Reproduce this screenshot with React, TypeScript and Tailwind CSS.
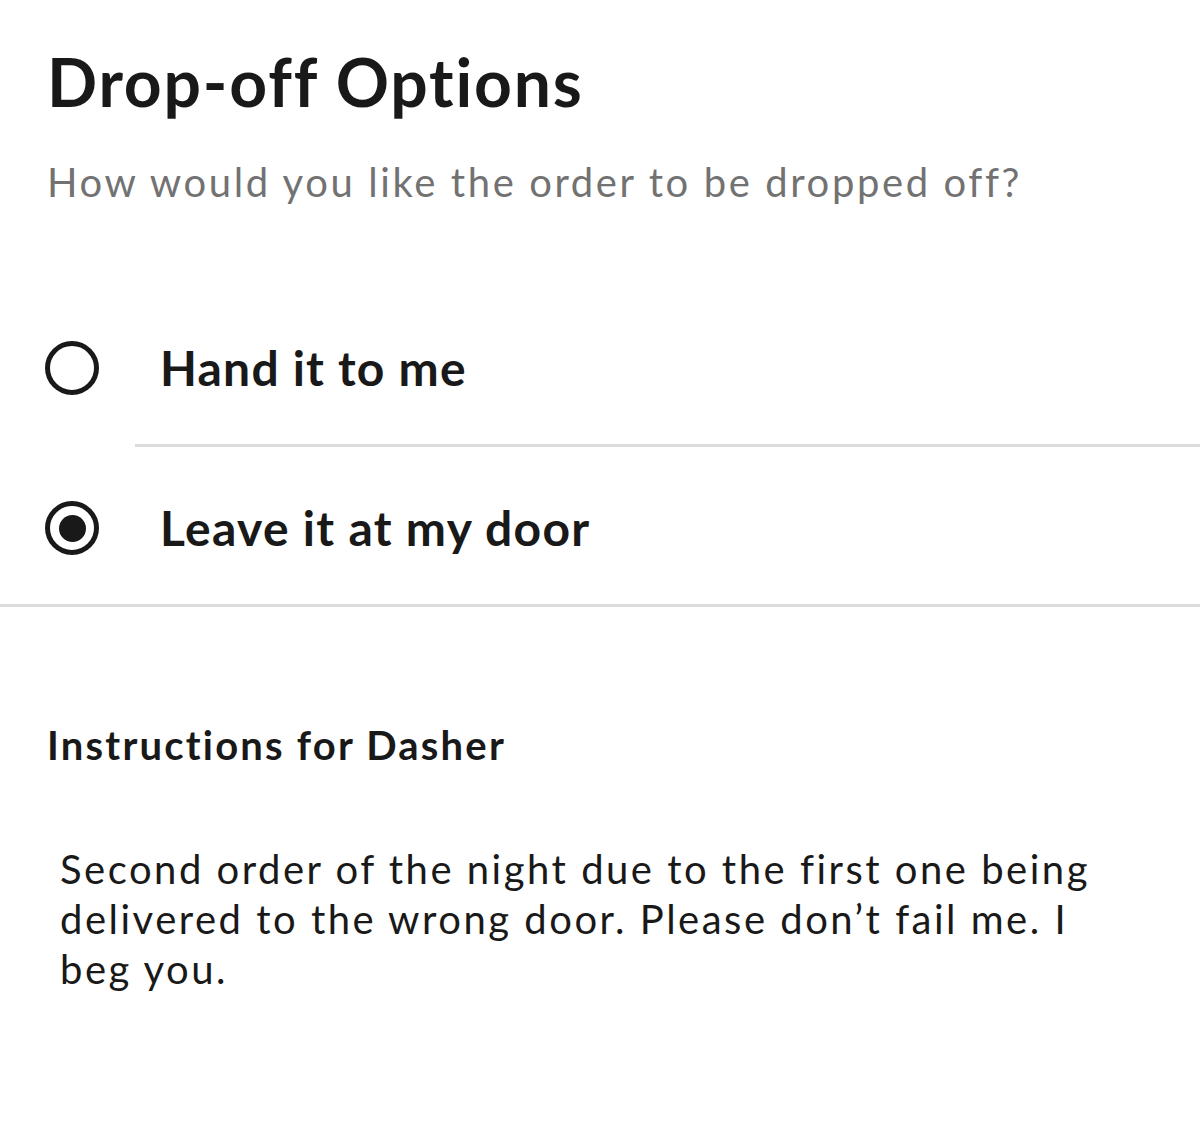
import React from "react";

function Radio({ checked }: { checked: boolean }) {
  return (
    <div className="w-[54px] h-[54px] rounded-full border-[5px] border-[#191919] flex items-center justify-center shrink-0">
      {checked && <div className="w-[27px] h-[27px] rounded-full bg-[#191919]" />}
    </div>
  );
}

export default function App() {
  return (
    <div className="w-[1200px] h-[1148px] bg-white text-[#191919] overflow-hidden" style={{ fontFamily: "Lato, 'Noto Sans', sans-serif" }}>
      <div className="pl-[47px] pt-[42px]">
        <h1 className="text-[66px] leading-[80px] font-bold tracking-[1.8px]">Drop-off Options</h1>
        <p className="mt-[35px] text-[40px] leading-[50px] text-[#727272] tracking-[2.6px]">How would you like the order to be dropped off?</p>
      </div>
      <div className="mt-[85px]">
        <div className="flex items-center h-[152px] pl-[45px]">
          <Radio checked={false} />
          <span className="ml-[61px] text-[48px] font-bold tracking-[1.2px]">Hand it to me</span>
        </div>
        <div className="ml-[135px] h-[3px] bg-[#dcdcdc]" />
        <div className="flex items-center h-[157px] pl-[45px] pt-[5px]">
          <Radio checked={true} />
          <span className="ml-[61px] text-[48px] font-bold tracking-[1.3px]">Leave it at my door</span>
        </div>
        <div className="h-[3px] bg-[#dcdcdc]" />
      </div>
      <div className="pl-[47px] pt-[113px]">
        <h2 className="text-[40px] leading-[50px] font-bold tracking-[2.2px]">Instructions for Dasher</h2>
        <p className="mt-[74px] ml-[13px] w-[1060px] text-[40px] leading-[50px] tracking-[2.5px]">
          Second order of the night due to the first one being delivered to the wrong door. Please don’t fail me. I beg you.
        </p>
      </div>
    </div>
  );
}
